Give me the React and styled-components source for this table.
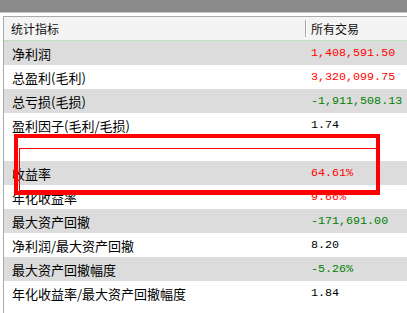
import React from "react";
import styled, { createGlobalStyle } from "styled-components";

const Global = createGlobalStyle`
  html, body { margin: 0; padding: 0; background: #ffffff; }
  body { width: 407px; height: 313px; overflow: hidden; font-family: "Noto Sans CJK SC", "Noto Sans", sans-serif; }
`;

const Page = styled.div`
  position: relative;
  width: 407px;
  height: 313px;
  overflow: hidden;
  background: #ffffff;
`;

const TopBar = styled.div`
  height: 12px;
  background: #8b8b8b;
  border-bottom: 1px solid #c9c9c9;
`;

const Gap = styled.div`
  height: 3px;
`;

const Grid = styled.div`
  margin-left: 3px;
  border-left: 1px solid #a9a9a9;
  border-top: 1px solid #a9a9a9;
  height: 400px;
`;

const Header = styled.div`
  display: grid;
  grid-template-columns: 301px 1fr;
  height: 23px;
  background: #f4f4f4;
  border-bottom: 1px solid #b9e3b9;
`;

const HeadCell = styled.div`
  display: flex;
  align-items: center;
  padding-left: ${(p) => p.$pad}px;
  font-size: 12px;
  color: #111;
  position: relative;
  ${(p) =>
    p.$divider &&
    `&::before{content:"";position:absolute;left:0;top:3px;bottom:3px;width:1px;background:#a8a8a8;box-shadow:1px 0 0 #ffffff;}`}
`;

const Row = styled.div`
  display: grid;
  grid-template-columns: 301px 1fr;
  height: 24px;
  background: ${(p) => (p.$shade ? "#dcdcdc" : "#ffffff")};
`;

const Label = styled.div`
  display: flex;
  align-items: center;
  padding-left: 8px;
  font-size: 13px;
  color: #000;
  white-space: nowrap;
`;

const Value = styled.div`
  display: flex;
  align-items: center;
  padding-left: 6px;
  font-family: "Liberation Mono", monospace;
  font-size: 11.7px;
  color: ${(p) => p.$color};
  white-space: nowrap;
`;

const Frame = styled.div`
  position: absolute;
  left: ${(p) => p.$x}px;
  top: ${(p) => p.$y}px;
  width: ${(p) => p.$w}px;
  height: ${(p) => p.$h}px;
  border: ${(p) => p.$b}px solid #ff0000;
  box-sizing: border-box;
  pointer-events: none;
`;

const RED = "#ff0000";
const GREEN = "#008000";
const BLACK = "#000000";

const rows = [
  { label: "净利润", value: "1,408,591.50", color: RED, shade: true },
  { label: "总盈利(毛利)", value: "3,320,099.75", color: RED, shade: false },
  { label: "总亏损(毛损)", value: "-1,911,508.13", color: GREEN, shade: true },
  { label: "盈利因子(毛利/毛损)", value: "1.74", color: BLACK, shade: false },
  { label: "", value: "", color: BLACK, shade: false },
  { label: "收益率", value: "64.61%", color: RED, shade: true },
  { label: "年化收益率", value: "9.66%", color: RED, shade: false },
  { label: "最大资产回撤", value: "-171,691.00", color: GREEN, shade: true },
  { label: "净利润/最大资产回撤", value: "8.20", color: BLACK, shade: false },
  { label: "最大资产回撤幅度", value: "-5.26%", color: GREEN, shade: true },
  { label: "年化收益率/最大资产回撤幅度", value: "1.84", color: BLACK, shade: false },
];

export default function App() {
  return (
    <Page>
      <Global />
      <TopBar />
      <Gap />
      <Grid>
        <Header>
          <HeadCell $pad={7}>统计指标</HeadCell>
          <HeadCell $pad={6} $divider>所有交易</HeadCell>
        </Header>
        {rows.map((r, i) => (
          <Row key={i} $shade={r.shade}>
            <Label>{r.label}</Label>
            <Value $color={r.color}>{r.value}</Value>
          </Row>
        ))}
      </Grid>
      <Frame $x={19} $y={148} $w={358} $h={43} $b={1} />
      <Frame $x={14} $y={134} $w={366} $h={61} $b={4} />
    </Page>
  );
}
